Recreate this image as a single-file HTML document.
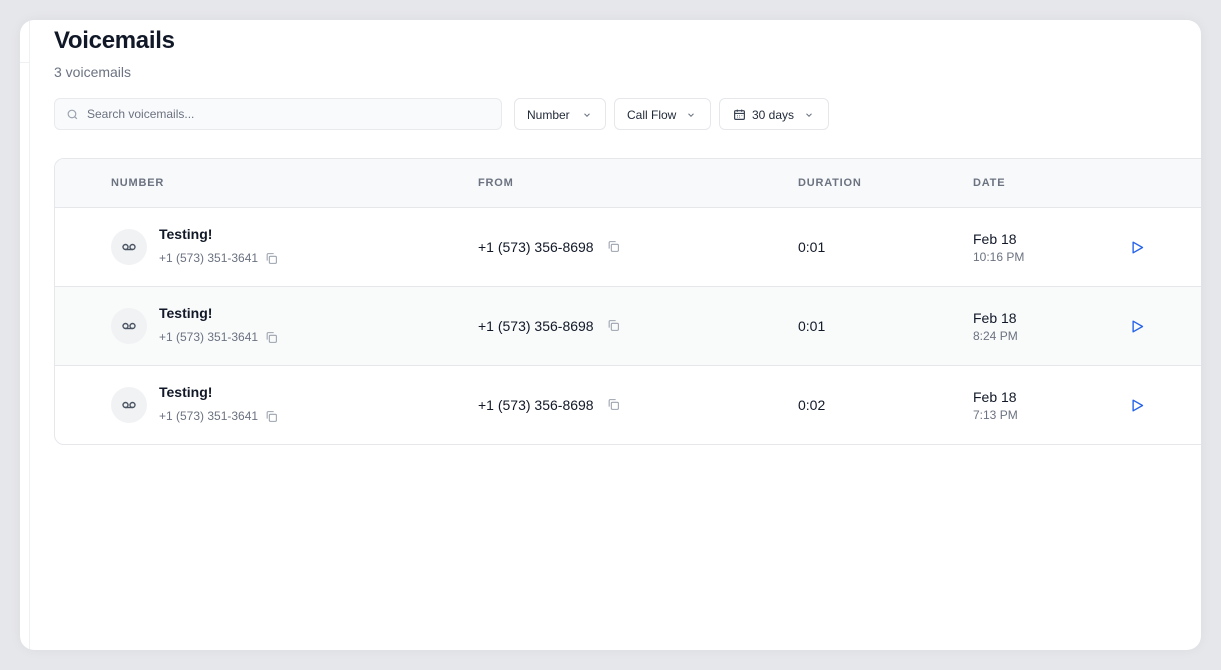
<!DOCTYPE html>
<html><head><meta charset="utf-8"><style>
*{box-sizing:border-box;margin:0;padding:0}
body{width:1221px;height:670px;background:#e6e7eb;font-family:"Liberation Sans",sans-serif;position:relative;overflow:hidden;color:#111827}
.card{position:absolute;left:20px;top:20px;width:1181px;height:630px;background:#fff;border-radius:14px;overflow:hidden;box-shadow:0 0 12px rgba(0,0,0,.05)}
.vl{position:absolute;left:9px;top:0;bottom:0;width:1px;background:#eef0f2}
.hl{position:absolute;left:0;top:42px;width:9px;height:1px;background:#eef0f2}
h1{position:absolute;left:34px;top:7px;font-size:24px;font-weight:700;color:#111827;letter-spacing:-.3px}
.sub{position:absolute;left:34px;top:44px;font-size:14px;color:#6b7280}
.search{position:absolute;left:34px;top:78px;width:448px;height:32px;border:1px solid #e8eaed;border-radius:6px;background:#f9fafb;font-size:12px;color:#6b7280;padding:8px 0 0 32px}
.search svg{position:absolute;left:11px;top:9px}
.btn{position:absolute;top:78px;height:32px;border:1px solid #e5e7eb;border-radius:6px;background:#fff;font-size:12px;color:#1f2937;padding:9px 0 0 12px}
.btn svg.ch{position:absolute;top:11px}
.table{position:absolute;left:34px;top:138px;width:1160px;height:287px;border:1px solid #e5e7eb;border-radius:10px;overflow:hidden}
.th{height:49px;background:#f8f9fa;border-bottom:1px solid #e5e7eb;position:relative;font-size:11px;font-weight:700;color:#6b7280;letter-spacing:.8px}
.th span{position:absolute;top:18px}
.row{height:79px;border-bottom:1px solid #e5e7eb;position:relative}
.row:nth-child(3){background:#f9fafa}
.row:last-child{border-bottom:none}
.av{position:absolute;left:56px;top:21px;width:36px;height:36px;border-radius:50%;background:#f1f2f4}
.av svg{position:absolute;left:11px;top:14px}
.name{position:absolute;left:104px;top:18px;font-size:14px;font-weight:700;color:#111827}
.num{position:absolute;left:104px;top:43px;font-size:12px;color:#6b7280}
.from{position:absolute;left:423px;top:31px;font-size:14px;color:#111827}
.dur{position:absolute;left:743px;top:31px;font-size:14px;color:#111827}
.date{position:absolute;left:918px;top:23px;font-size:14px;color:#111827}
.time{position:absolute;left:918px;top:42px;font-size:12px;color:#6b7280}
.play{position:absolute;left:1075px;top:32px}
.cp{position:absolute}
</style></head><body>
<div class="card">
<div class="vl"></div><div class="hl"></div>
<h1>Voicemails</h1>
<div class="sub">3 voicemails</div>
<div class="search"><svg width="13" height="13" viewBox="0 0 24 24" fill="none" stroke="#9ca3af" stroke-width="2.2"><circle cx="11" cy="11" r="7"/><path d="M20 20l-4-4"/></svg>Search voicemails...</div>
<div class="btn" style="left:494px;width:92px">Number<svg class="ch" style="left:67px" width="10" height="10" viewBox="0 0 24 24" fill="none" stroke="#6b7280" stroke-width="2.5"><path d="M6 9l6 6 6-6"/></svg></div>
<div class="btn" style="left:594px;width:97px">Call Flow<svg class="ch" style="left:71px" width="10" height="10" viewBox="0 0 24 24" fill="none" stroke="#6b7280" stroke-width="2.5"><path d="M6 9l6 6 6-6"/></svg></div>
<div class="btn" style="left:699px;width:110px;padding-left:32px"><svg style="position:absolute;left:13px;top:9px" width="13" height="13" viewBox="0 0 24 24" fill="none" stroke="#374151" stroke-width="2.2"><rect x="3" y="5" width="18" height="16" rx="2"/><path d="M3 10h18M8 3v4M16 3v4M8 14h1M12 14h1M16 14h1M8 17h1M12 17h1"/></svg>30 days<svg class="ch" style="left:84px" width="10" height="10" viewBox="0 0 24 24" fill="none" stroke="#6b7280" stroke-width="2.5"><path d="M6 9l6 6 6-6"/></svg></div>

<div class="table">
<div class="th"><span style="left:56px">NUMBER</span><span style="left:423px">FROM</span><span style="left:743px">DURATION</span><span style="left:918px">DATE</span></div>

<div class="row">
<div class="av"><svg width="14" height="8" viewBox="0 0 14 8" fill="none" stroke="#4b5563" stroke-width="1.4"><circle cx="3.5" cy="4" r="2.5"/><circle cx="10.5" cy="4" r="2.5"/><path d="M3.5 6.5h7"/></svg></div>
<div class="name">Testing!</div><div class="num">+1 (573) 351-3641</div>
<svg class="cp" style="left:210px;top:44px" width="13" height="13" viewBox="0 0 24 24" fill="none" stroke="#9ca3af" stroke-width="2"><rect x="8" y="8" width="13" height="13" rx="2"/><path d="M4 16V5a2 2 0 0 1 2-2h10"/></svg>
<div class="from">+1 (573) 356-8698</div>
<svg class="cp" style="left:552px;top:32px" width="13" height="13" viewBox="0 0 24 24" fill="none" stroke="#9ca3af" stroke-width="2"><rect x="8" y="8" width="13" height="13" rx="2"/><path d="M4 16V5a2 2 0 0 1 2-2h10"/></svg>
<div class="dur">0:01</div><div class="date">Feb 18</div><div class="time">10:16 PM</div>
<svg class="play" width="15" height="15" viewBox="0 0 24 24" fill="none" stroke="#2563eb" stroke-width="2.2" stroke-linejoin="round"><path d="M5 3.5v17l15-8.5z"/></svg>
</div>

<div class="row">
<div class="av"><svg width="14" height="8" viewBox="0 0 14 8" fill="none" stroke="#4b5563" stroke-width="1.4"><circle cx="3.5" cy="4" r="2.5"/><circle cx="10.5" cy="4" r="2.5"/><path d="M3.5 6.5h7"/></svg></div>
<div class="name">Testing!</div><div class="num">+1 (573) 351-3641</div>
<svg class="cp" style="left:210px;top:44px" width="13" height="13" viewBox="0 0 24 24" fill="none" stroke="#9ca3af" stroke-width="2"><rect x="8" y="8" width="13" height="13" rx="2"/><path d="M4 16V5a2 2 0 0 1 2-2h10"/></svg>
<div class="from">+1 (573) 356-8698</div>
<svg class="cp" style="left:552px;top:32px" width="13" height="13" viewBox="0 0 24 24" fill="none" stroke="#9ca3af" stroke-width="2"><rect x="8" y="8" width="13" height="13" rx="2"/><path d="M4 16V5a2 2 0 0 1 2-2h10"/></svg>
<div class="dur">0:01</div><div class="date">Feb 18</div><div class="time">8:24 PM</div>
<svg class="play" width="15" height="15" viewBox="0 0 24 24" fill="none" stroke="#2563eb" stroke-width="2.2" stroke-linejoin="round"><path d="M5 3.5v17l15-8.5z"/></svg>
</div>

<div class="row">
<div class="av"><svg width="14" height="8" viewBox="0 0 14 8" fill="none" stroke="#4b5563" stroke-width="1.4"><circle cx="3.5" cy="4" r="2.5"/><circle cx="10.5" cy="4" r="2.5"/><path d="M3.5 6.5h7"/></svg></div>
<div class="name">Testing!</div><div class="num">+1 (573) 351-3641</div>
<svg class="cp" style="left:210px;top:44px" width="13" height="13" viewBox="0 0 24 24" fill="none" stroke="#9ca3af" stroke-width="2"><rect x="8" y="8" width="13" height="13" rx="2"/><path d="M4 16V5a2 2 0 0 1 2-2h10"/></svg>
<div class="from">+1 (573) 356-8698</div>
<svg class="cp" style="left:552px;top:32px" width="13" height="13" viewBox="0 0 24 24" fill="none" stroke="#9ca3af" stroke-width="2"><rect x="8" y="8" width="13" height="13" rx="2"/><path d="M4 16V5a2 2 0 0 1 2-2h10"/></svg>
<div class="dur">0:02</div><div class="date">Feb 18</div><div class="time">7:13 PM</div>
<svg class="play" width="15" height="15" viewBox="0 0 24 24" fill="none" stroke="#2563eb" stroke-width="2.2" stroke-linejoin="round"><path d="M5 3.5v17l15-8.5z"/></svg>
</div>
</div>
</div>
</body></html>
